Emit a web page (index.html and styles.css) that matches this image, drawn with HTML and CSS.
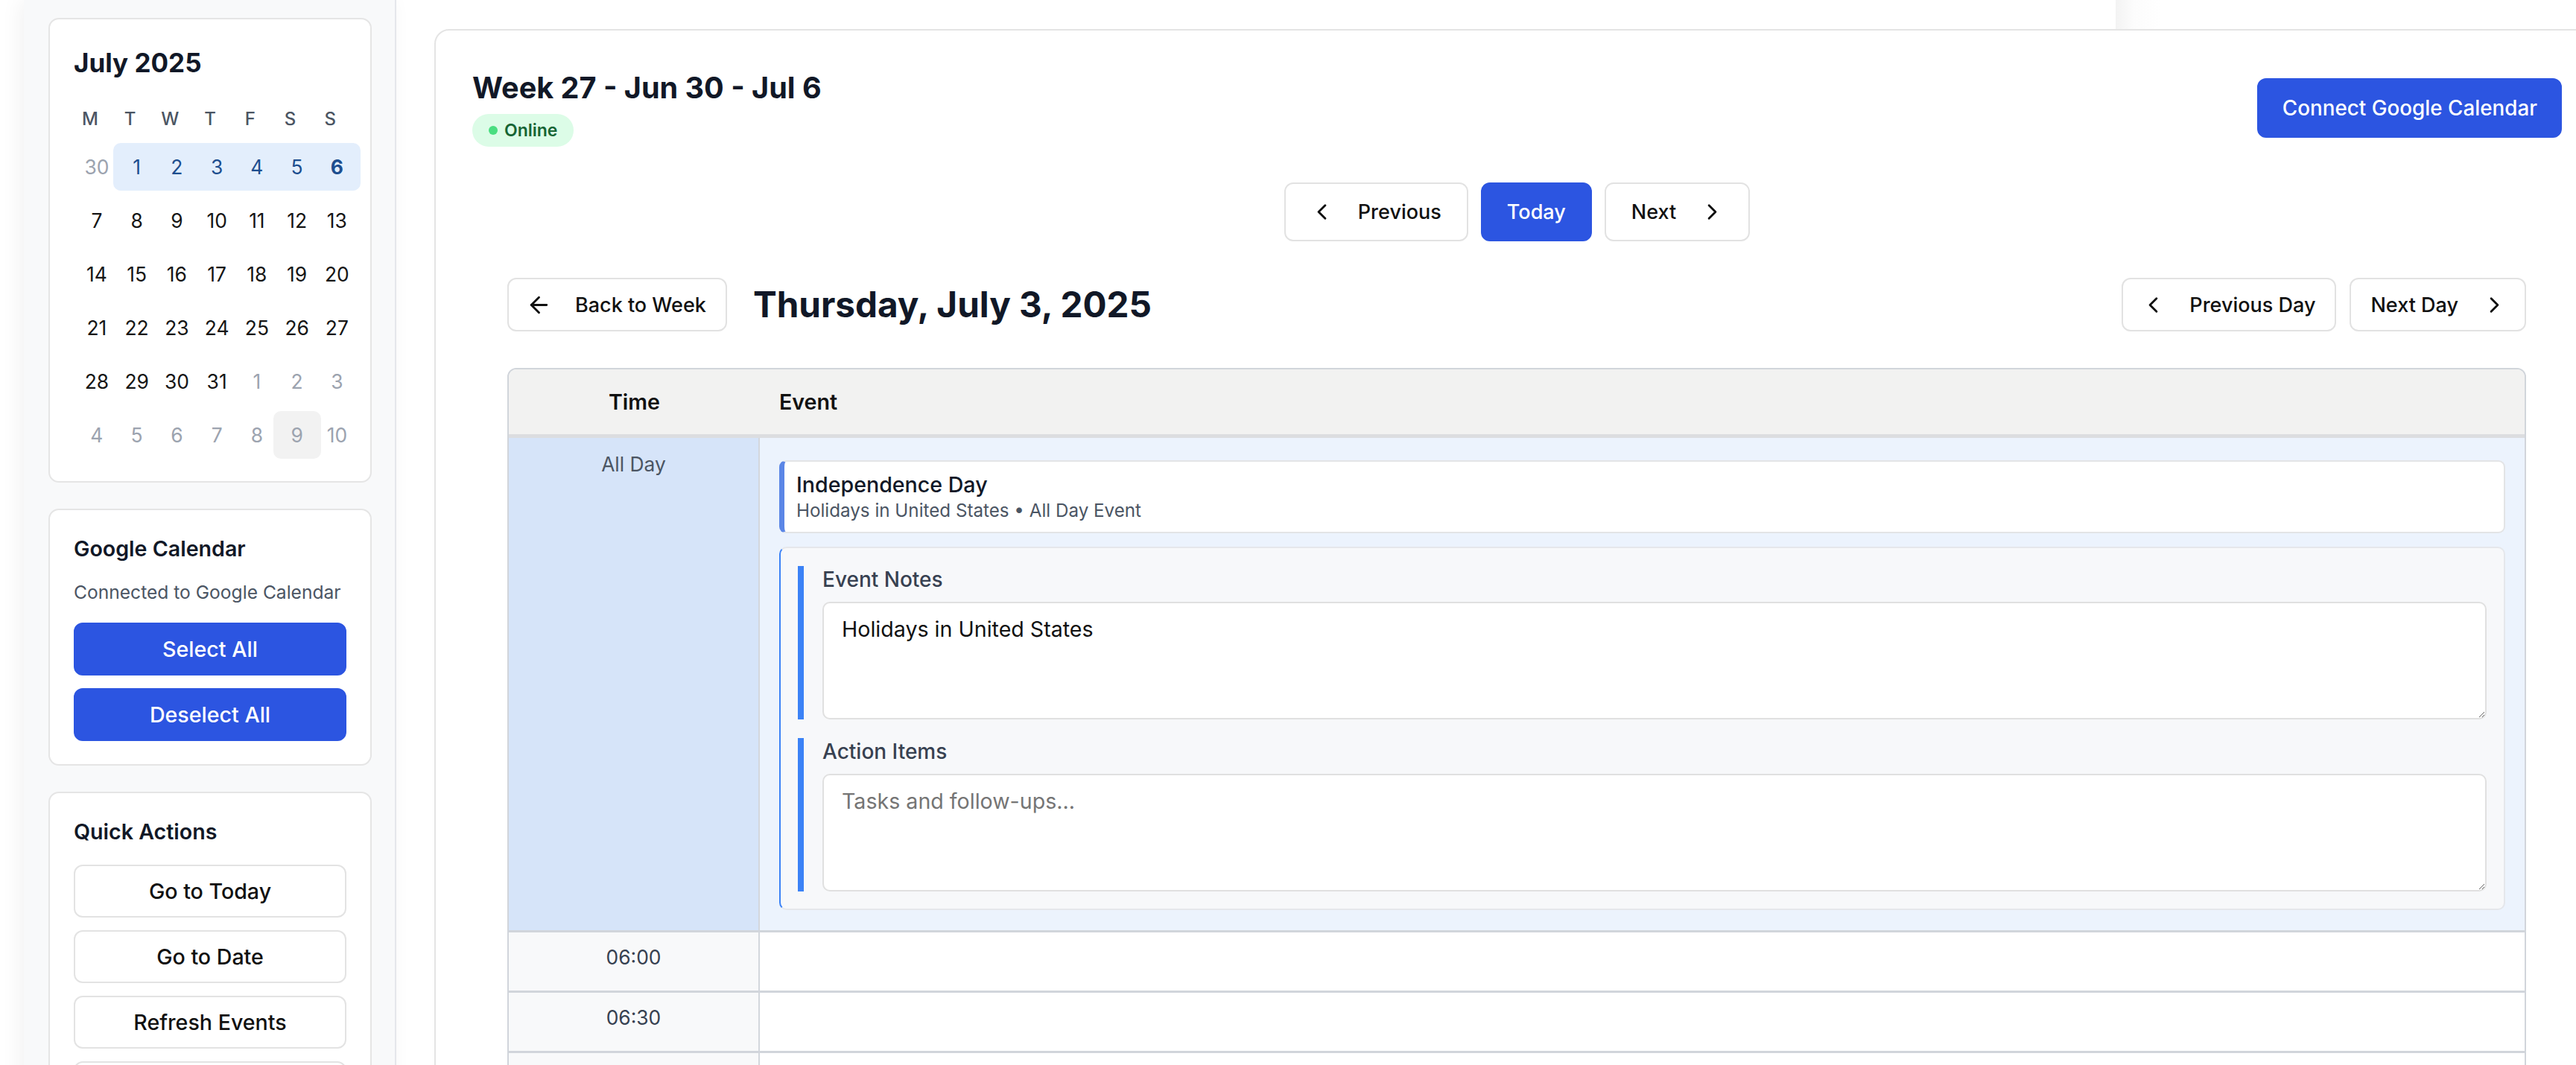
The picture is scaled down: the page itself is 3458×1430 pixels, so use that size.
FILE: index.html
```html
<!DOCTYPE html>
<html lang="en">
<head>
<meta charset="utf-8">
<title>Calendar – Day View</title>
<link rel="stylesheet" href="styles.css">
</head>
<body>
<div class="topright-shade"></div>
<div class="app">
  <aside class="sidebar">
    <section class="panel cal">
      <h2 class="cal-title">July 2025</h2>
      <div class="cal-head">
        <span>M</span><span>T</span><span>W</span><span>T</span><span>F</span><span>S</span><span>S</span>
      </div>
      <div class="cal-grid">
        <span class="d muted">30</span>
        <span class="d wk wk-first">1</span>
        <span class="d wk">2</span>
        <span class="d wk">3</span>
        <span class="d wk">4</span>
        <span class="d wk">5</span>
        <span class="d wk wk-last today">6</span>

        <span class="d">7</span><span class="d">8</span><span class="d">9</span><span class="d">10</span><span class="d">11</span><span class="d">12</span><span class="d">13</span>
        <span class="d">14</span><span class="d">15</span><span class="d">16</span><span class="d">17</span><span class="d">18</span><span class="d">19</span><span class="d">20</span>
        <span class="d">21</span><span class="d">22</span><span class="d">23</span><span class="d">24</span><span class="d">25</span><span class="d">26</span><span class="d">27</span>
        <span class="d">28</span><span class="d">29</span><span class="d">30</span><span class="d">31</span><span class="d muted">1</span><span class="d muted">2</span><span class="d muted">3</span>
        <span class="d muted">4</span><span class="d muted">5</span><span class="d muted">6</span><span class="d muted">7</span><span class="d muted">8</span><span class="d muted hover">9</span><span class="d muted">10</span>
      </div>
    </section>

    <section class="panel">
      <h3 class="panel-title">Google Calendar</h3>
      <p class="panel-sub">Connected to Google Calendar</p>
      <div class="stack">
        <button class="sbtn sbtn-primary">Select All</button>
        <button class="sbtn sbtn-primary">Deselect All</button>
      </div>
    </section>

    <section class="panel">
      <h3 class="panel-title">Quick Actions</h3>
      <div class="stack stack-qa">
        <button class="sbtn">Go to Today</button>
        <button class="sbtn">Go to Date</button>
        <button class="sbtn">Refresh Events</button>
        <button class="sbtn" aria-label="Settings"></button>
      </div>
    </section>
  </aside>

  <main class="main">
    <div class="main-card">
      <header class="week-head">
        <div class="week-info">
          <h1 class="week-title">Week 27 - Jun 30 - Jul 6</h1>
          <span class="badge"><i class="dot"></i>Online</span>
        </div>
        <button class="btn btn-primary btn-connect">Connect Google Calendar</button>
      </header>

      <nav class="week-nav">
        <button class="btn btn-lead">
          <svg class="ico" viewBox="0 0 24 24"><path d="m15 18-6-6 6-6"/></svg>
          <span>Previous</span>
        </button>
        <button class="btn btn-primary btn-today">Today</button>
        <button class="btn btn-trail">
          <span>Next</span>
          <svg class="ico" viewBox="0 0 24 24"><path d="m9 18 6-6-6-6"/></svg>
        </button>
      </nav>

      <section class="day-view">
        <div class="day-head">
          <div class="day-head-left">
            <button class="btn btn-sm btn-lead">
              <svg class="ico" viewBox="0 0 24 24"><path d="m12 19-7-7 7-7"/><path d="M19 12H5"/></svg>
              <span>Back to Week</span>
            </button>
            <h2 class="day-title">Thursday, July 3, 2025</h2>
          </div>
          <div class="day-head-right">
            <button class="btn btn-sm btn-lead">
              <svg class="ico" viewBox="0 0 24 24"><path d="m15 18-6-6 6-6"/></svg>
              <span>Previous Day</span>
            </button>
            <button class="btn btn-sm btn-trail">
              <span>Next Day</span>
              <svg class="ico" viewBox="0 0 24 24"><path d="m9 18 6-6-6-6"/></svg>
            </button>
          </div>
        </div>

        <div class="table">
          <div class="row row-head">
            <div class="tc">Time</div>
            <div class="ec">Event</div>
          </div>

          <div class="row row-allday">
            <div class="tc">All Day</div>
            <div class="ec">
              <div class="event">
                <div class="event-title">Independence Day</div>
                <div class="event-meta">Holidays in United States • All Day Event</div>
              </div>
              <div class="notes">
                <div class="note-sec">
                  <label class="note-label">Event Notes</label>
                  <textarea class="note-input">Holidays in United States</textarea>
                </div>
                <div class="note-sec">
                  <label class="note-label">Action Items</label>
                  <textarea class="note-input" placeholder="Tasks and follow-ups..."></textarea>
                </div>
              </div>
            </div>
          </div>

          <div class="row row-slot"><div class="tc">06:00</div><div class="ec"></div></div>
          <div class="row row-slot"><div class="tc">06:30</div><div class="ec"></div></div>
          <div class="row row-slot"><div class="tc" aria-label="07:00"></div><div class="ec"></div></div>
        </div>
      </section>
    </div>
  </main>
</div>
</body>
</html>
```

FILE: styles.css
```css
html, body {
  margin: 0;
  padding: 0;
  overflow: hidden;
  background: #ffffff;
}

body {
  font-family: Inter, "Noto Sans", sans-serif;
  color: #111827;
  width: 3458px;
  height: 1430px;
  position: relative;
}

button, textarea {
  font: inherit;
}

h1, h2, h3, p {
  margin: 0;
}

.topright-shade {
  position: absolute;
  top: 0;
  left: 2840px;
  width: 618px;
  height: 39px;
  background: linear-gradient(to right, #f3f3f3 0, #fcfcfc 24px, #ffffff 60px);
}

.app {
  display: flex;
  align-items: flex-start;
  position: relative;
}

/* ---------- Sidebar ---------- */
.sidebar {
  flex: none;
  box-sizing: border-box;
  width: 500px;
  min-height: 1430px;
  margin-left: 32px;
  padding: 24px 31px 0 33px;
  background: #f8f9fa;
  border-right: 2px solid #e5e7eb;
  box-shadow: -6px 0 26px rgba(0, 0, 0, 0.05);
  display: flex;
  flex-direction: column;
  gap: 35px;
}

.panel {
  box-sizing: border-box;
  width: 434px;
  background: #ffffff;
  border: 2px solid #e5e5e5;
  border-radius: 14px;
  padding: 30px 32px 31px 32px;
}

.cal {
  padding: 33px 24px 30px 32px;
}

.cal-title {
  font-size: 35px;
  line-height: 50px;
  font-weight: 700;
  color: #111827;
  margin-bottom: 25px;
}

.cal-head {
  display: grid;
  grid-template-columns: repeat(7, 53.75px);
  height: 50px;
  margin-left: -5px;
  margin-bottom: 8px;
  align-items: center;
}

.cal-head span {
  text-align: center;
  font-size: 24px;
  font-weight: 500;
  color: #4b5563;
}

.cal-grid {
  display: grid;
  grid-template-columns: repeat(7, 53.75px);
  grid-auto-rows: 64px;
  row-gap: 8px;
  margin-left: 4px;
}

.d {
  margin: 0 -5.125px;
  display: flex;
  align-items: center;
  justify-content: center;
  font-size: 26.4px;
  color: #161616;
  border-radius: 10px;
}

.d.muted {
  color: #9ca3af;
}

.d.wk {
  background: #e3eefc;
  color: #1d4e8f;
  border-radius: 0;
}

.d.wk-first {
  border-radius: 10px 0 0 10px;
}

.d.wk-last {
  border-radius: 0 10px 10px 0;
}

.d.today {
  font-weight: 700;
}

.d.hover {
  background: #f2f2f2;
}

.panel-title {
  font-size: 28.6px;
  line-height: 43px;
  font-weight: 600;
  color: #111827;
}

.panel-sub {
  font-size: 24.6px;
  line-height: 37px;
  color: #4b5563;
  margin-top: 19px;
  white-space: nowrap;
}

.stack {
  display: flex;
  flex-direction: column;
  gap: 17px;
  margin-top: 22px;
}

.stack-qa {
  margin-top: 23px;
}

.sbtn {
  box-sizing: border-box;
  height: 71px;
  width: 100%;
  border: 2px solid #e3e3e3;
  border-radius: 12px;
  background: #ffffff;
  color: #111111;
  font-size: 28.6px;
  font-weight: 500;
  cursor: pointer;
}

.sbtn-primary {
  background: #2c55e1;
  border-color: #2c55e1;
  color: #ffffff;
}

/* ---------- Main ---------- */
.main {
  flex: none;
  margin-left: 51px;
  padding-top: 39px;
}

.main-card {
  box-sizing: border-box;
  width: 2907px;
  min-height: 1500px;
  background: #ffffff;
  border: 2px solid #e4e4e4;
  border-radius: 20px;
  padding: 52px 49px 0 49px;
}

.week-head {
  display: flex;
  justify-content: space-between;
  align-items: center;
}

.week-title {
  font-size: 39.6px;
  line-height: 50px;
  font-weight: 700;
  color: #111827;
}

.badge {
  margin-top: 10px;
  box-sizing: border-box;
  height: 44px;
  display: inline-flex;
  align-items: center;
  gap: 9px;
  padding: 0 22px;
  border-radius: 22px;
  background: #dcfce7;
  color: #166534;
  font-size: 23px;
  font-weight: 600;
}

.week-info {
  display: flex;
  flex-direction: column;
  align-items: flex-start;
}

.dot {
  width: 12px;
  height: 12px;
  border-radius: 50%;
  background: #4ade80;
}

.btn {
  box-sizing: border-box;
  height: 79px;
  display: inline-flex;
  align-items: center;
  padding: 0 33px;
  gap: 31px;
  border: 2px solid #e2e2e2;
  border-radius: 12px;
  background: #ffffff;
  color: #111111;
  font-size: 27px;
  font-weight: 500;
  white-space: nowrap;
  cursor: pointer;
}

.btn-primary {
  background: #2c55e1;
  border-color: #2c55e1;
  color: #ffffff;
}

.btn-connect {
  height: 80px;
  padding: 0 31px 0 32px;
  font-size: 27.8px;
}

.btn-lead {
  padding: 0 34px 0 31px;
}

.btn-trail {
  padding: 0 31px 0 34px;
}

.ico {
  flex: none;
  width: 35px;
  height: 35px;
  fill: none;
  stroke: currentColor;
  stroke-width: 2;
  stroke-linecap: round;
  stroke-linejoin: round;
}

.week-nav {
  margin-top: 48px;
  display: flex;
  justify-content: center;
  gap: 17px;
}

.day-view {
  margin-top: 49px;
  padding: 0 48px 0 47px;
}

.day-head {
  display: flex;
  justify-content: space-between;
  align-items: center;
}

.day-head-left {
  display: flex;
  align-items: center;
  gap: 35px;
}

.day-head-right {
  display: flex;
  align-items: center;
  gap: 18px;
}

.btn-sm {
  height: 72px;
}

.btn-sm.btn-lead {
  padding: 0 26px 0 23px;
}

.btn-sm.btn-trail {
  padding: 0 23px 0 26px;
}

.day-title {
  font-size: 47.6px;
  line-height: 60px;
  font-weight: 700;
  color: #111827;
}

/* ---------- Table ---------- */
.table {
  margin-top: 49px;
  border: 2px solid #d1d5db;
  border-radius: 12px;
  overflow: hidden;
}

.row {
  display: grid;
  grid-template-columns: 337px 1fr;
}

.row-head {
  height: 87px;
  background: #f2f2f1;
  border-bottom: 5px solid #dcdde0;
  align-items: center;
  font-size: 28.6px;
  font-weight: 600;
  color: #111111;
}

.row-head .tc {
  text-align: center;
}

.row-head .ec {
  padding-left: 26px;
}

.row-allday {
  border-bottom: 3px solid #d1d5db;
}

.row-allday .tc,
.row-slot .tc {
  box-sizing: border-box;
  border-right: 2px solid #d3d7dd;
  text-align: center;
  font-size: 26.4px;
  line-height: 37px;
  padding-top: 17px;
}

.row-allday .tc {
  background: #d6e4f9;
  color: #4b5563;
}

.row-allday .ec {
  background: #ecf3fd;
  padding: 30px 26px 27px 26px;
}

.event {
  background: #ffffff;
  border: 2px solid #e3e4e6;
  border-left: 7px solid #5b86e6;
  border-radius: 9px;
  padding: 13px 16px 12px 16px;
}

.event-title {
  font-size: 28.6px;
  line-height: 36px;
  font-weight: 500;
  color: #111827;
}

.event-meta {
  margin-top: 1px;
  font-size: 24.2px;
  line-height: 32px;
  color: #4b5563;
}

.notes {
  margin-top: 18px;
  background: #f7f8fa;
  border: 2px solid #e5e7eb;
  border-left: 2px solid #3b82f6;
  border-radius: 10px;
  padding: 24px 23px 23px 23px;
  display: flex;
  flex-direction: column;
  gap: 25px;
}

.note-sec {
  border-left: 8px solid #3b82f6;
  padding-left: 25px;
  display: flex;
  flex-direction: column;
}

.note-label {
  font-size: 28px;
  line-height: 37px;
  font-weight: 500;
  color: #374151;
  margin-bottom: 11px;
}

.note-input {
  display: block;
  box-sizing: border-box;
  width: 100%;
  height: 158px;
  border: 2px solid #e0e0e0;
  border-radius: 10px;
  background: #ffffff;
  padding: 14px 24px;
  font-size: 28.6px;
  line-height: 1.5;
  color: #111111;
  outline: none;
}

.note-input::placeholder {
  color: #757575;
}

.row-slot {
  height: 81px;
  box-sizing: border-box;
  border-bottom: 3px solid #d1d5db;
}

.row-slot .tc {
  background: #f8f9fa;
  color: #374151;
  padding-top: 15px;
}

.row-slot .ec {
  background: #ffffff;
}
```
